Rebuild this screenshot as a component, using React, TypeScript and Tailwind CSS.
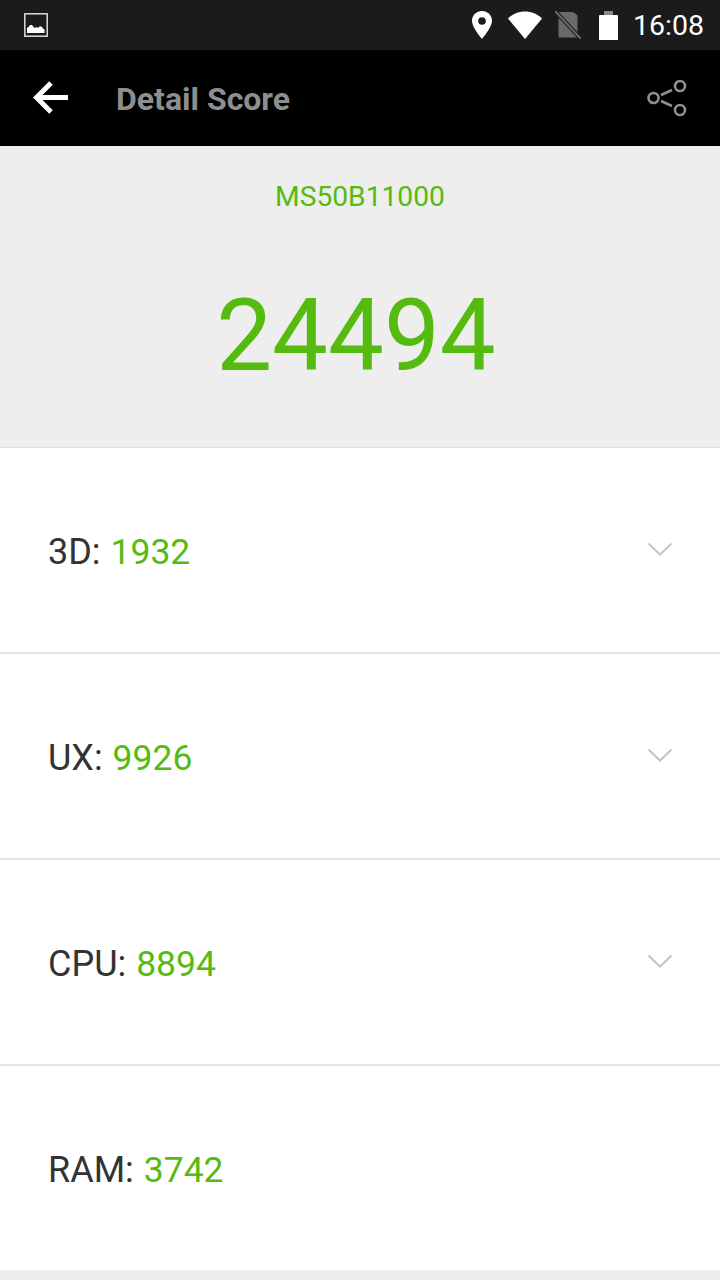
import React from 'react';

const GREEN = 'text-[#56bb0f]';

const ImageIcon = () => (
  <svg width="24" height="24" viewBox="0 0 24 24" className="block">
    <rect x="0.800" y="0.800" width="22.400" height="22.400" fill="none" stroke="#d0d0d0" strokeWidth="1.600" />
    <path d="M3 20v-5l1.500-1 1.500-2 2 0 2.500 3 2-1 1.500 1 1.500-1.500 2 0 1.500 2 1.500 1V20z" fill="#fff" />
  </svg>
);

const StatusIcons = () => (
  <div className="flex items-center">
    <svg width="20" height="28" viewBox="0 0 20 28" className="block">
      <path fillRule="evenodd" d="M10 0C4.400 0 0 4.400 0 9.800 0 16.500 10 28 10 28s10-11.500 10-18.200C20 4.400 15.600 0 10 0zm0 6.200a3.800 3.800 0 1 1 0 7.600 3.800 3.800 0 0 1 0-7.600z" fill="#fff" />
    </svg>
    <svg width="34" height="28" viewBox="0 0 34 28" className="block ml-4">
      <path d="M0 7.500C4.700 2.800 10.500 0.500 17 0.500s12.300 2.300 17 7L17 28z" fill="#fff" />
    </svg>
    <svg width="26" height="28" viewBox="0 0 26 28" className="block ml-[13px]">
      <path d="M6 1h11.500a2 2 0 0 1 1.500 0.500l3.500 3V25a1.500 1.500 0 0 1-1.500 1.500H6A2 2 0 0 1 3.500 25V3A2 2 0 0 1 6 1z" fill="#6a6a6a" />
      <path d="M0 0l26 28" stroke="#1b1b1b" strokeWidth="4" />
      <path d="M0 0l26 28" stroke="#6a6a6a" strokeWidth="2" />
    </svg>
    <svg width="19" height="29" viewBox="0 0 19 29" className="block ml-[18px]">
      <path d="M5 4h9v-4H5z" fill="#8a8a8a" />
      <path d="M0 5a1 1 0 0 1 1-1h17a1 1 0 0 1 1 1v24H0z" fill="#fff" />
    </svg>
  </div>
);

const ShareIcon = () => (
  <svg width="40" height="38" viewBox="0 0 40 38" className="block">
    <g fill="none" stroke="#8f8f8f" strokeWidth="2.600">
      <circle cx="6.500" cy="19" r="5" />
      <circle cx="33" cy="7" r="5" />
      <circle cx="33" cy="31" r="5" />
      <path d="M14 16l11-5M14 22l11 5" />
    </g>
  </svg>
);

const Chevron = () => (
  <svg width="26" height="16" viewBox="0 0 26 16" className="block">
    <path d="M1.500 2.500L13 13.500 24.500 2.500" fill="none" stroke="#c4c4c4" strokeWidth="2" />
  </svg>
);

const rows = [
  { label: '3D:', value: '1932', more: true },
  { label: 'UX:', value: '9926', more: true },
  { label: 'CPU:', value: '8894', more: true },
  { label: 'RAM:', value: '3742', more: false },
];

export default function App() {
  return (
    <div className="w-[720px] h-[1280px] overflow-hidden flex flex-col bg-[#eeeeee] font-['Roboto',sans-serif]">
      <div className="h-[50px] shrink-0 bg-[#1b1b1b] flex items-center justify-between pl-6 pr-4">
        <ImageIcon />
        <div className="flex items-center">
          <StatusIcons />
          <span className="ml-[15px] mt-[2px] text-[28.500px] leading-none text-white">16:08</span>
        </div>
      </div>

      <div className="h-[96px] shrink-0 bg-black flex items-center pl-[33px] pr-[33px]">
        <svg width="36" height="36" viewBox="0 0 36 36" className="block">
          <path d="M35 17.500H5M18 3L3.500 17.500 18 32" fill="none" stroke="#fff" strokeWidth="5" />
        </svg>
        <span className="ml-[47px] mt-[1px] text-[32px] font-bold text-[#8e8e8e] leading-none">Detail Score</span>
        <div className="ml-auto"><ShareIcon /></div>
      </div>

      <div className="h-[302px] shrink-0 bg-[#eeeeee] flex flex-col items-center border-b border-[#dedede]">
        <div className={`mt-[34px] text-[28.200px] leading-[34px] ${GREEN}`}>MS50B11000</div>
        <div className={`mt-[62px] -ml-[8px] text-[99.500px] leading-[120px] ${GREEN}`}>24494</div>
      </div>

      <div className="bg-white">
        {rows.map((row, i) => (
          <div key={row.label} className={`flex items-center justify-between pl-12 pr-[47px] ${i < 3 ? 'h-[206px] border-b-2 border-[#e3e3e3]' : 'h-[204px] pb-[2px]'}`}>
            <div className={`text-[36px] leading-none text-[#333333] ${i < 3 ? 'mt-[5px]' : 'mt-[7px]'}`}>
              {row.label} <span className={`ml-[1px] text-[35.500px] ${GREEN}`}>{row.value}</span>
            </div>
            {row.more && <div className="-translate-y-[1px]"><Chevron /></div>}
          </div>
        ))}
      </div>
    </div>
  );
}
